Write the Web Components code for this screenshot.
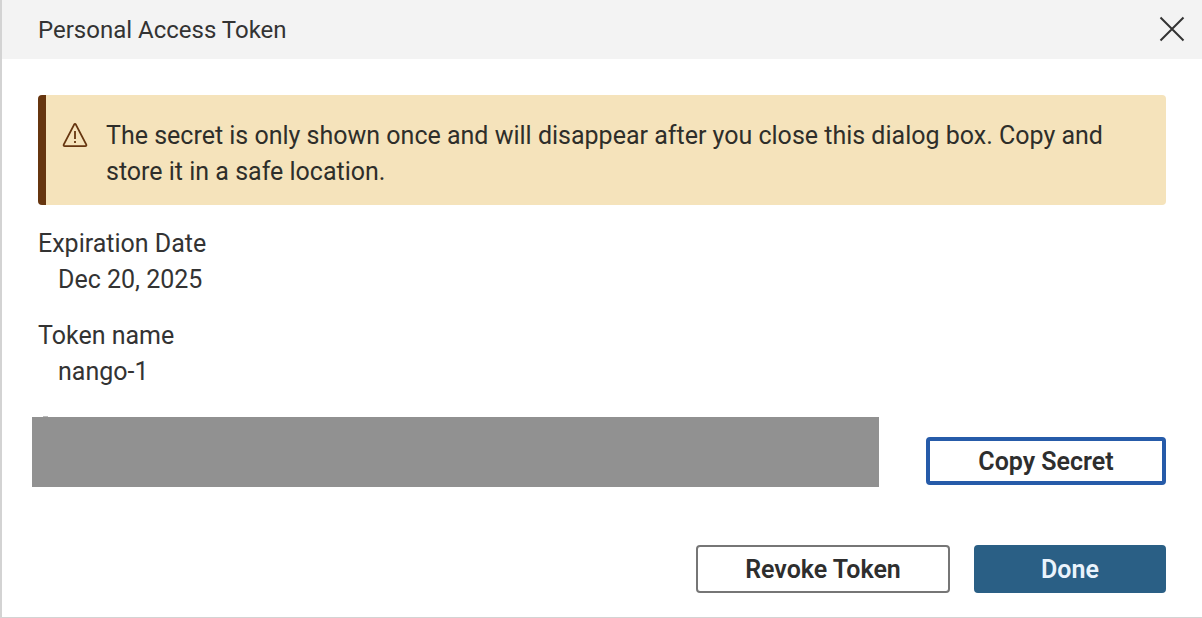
<!DOCTYPE html>
<html lang="en">
<head>
<meta charset="utf-8">
<meta name="viewport" content="width=device-width, initial-scale=1">
<title>Personal Access Token</title>
<style>
  body {
    margin: 0;
    background: #fff;
    color: #333;
    font: 400 25px/36px Roboto, "Liberation Sans", sans-serif;
  }
</style>
</head>
<body>
<token-dialog heading="Personal Access Token">
  <alert-banner>The secret is only shown once and will disappear after you close this dialog box. Copy and store it in a safe location.</alert-banner>
  <token-field label="Expiration Date">Dec 20, 2025</token-field>
  <token-field label="Token name">nango-1</token-field>
  <secret-row>
    <action-button variant="focused">Copy Secret</action-button>
  </secret-row>
  <action-button slot="actions" variant="outline">Revoke Token</action-button>
  <action-button slot="actions" variant="primary">Done</action-button>
</token-dialog>

<template id="token-dialog">
  <style>
    :host {
      display: flex;
      flex-direction: column;
      box-sizing: border-box;
      min-height: 100vh;
      border-left: 2px solid #d3d3d3;
      border-bottom: 1px solid #d3d3d3;
    }
    header {
      display: flex;
      align-items: center;
      justify-content: space-between;
      box-sizing: border-box;
      min-height: 59px;
      padding: 0 16px 0 36px;
      background: #f3f3f3;
    }
    h1 { margin: 0; font: inherit; font-size: 24px; }
    .close {
      display: flex;
      padding: 0 0 1px;
      border: 0;
      background: none;
      color: #333;
      cursor: pointer;
    }
    main {
      display: flex;
      flex-direction: column;
      gap: 20px;
      padding: 36px 36px 0;
    }
    footer {
      display: flex;
      justify-content: flex-end;
      gap: 24px;
      margin-top: auto;
      padding: 24px 36px;
    }
  </style>
  <header>
    <h1></h1>
    <button class="close" type="button" aria-label="Close">
      <svg width="28" height="28" viewBox="0 0 28 28" fill="none" stroke="currentColor" stroke-width="2" aria-hidden="true">
        <path d="M2.5 2.5 25.500 25.500M25.500 2.500 2.500 25.500"/>
      </svg>
    </button>
  </header>
  <main><slot></slot></main>
  <footer><slot name="actions"></slot></footer>
</template>

<template id="alert-banner">
  <style>
    :host {
      display: flex;
      gap: 18px;
      margin-bottom: 1px;
      padding: 23px 36px 15px 16px;
      border-left: 8px solid #66350f;
      border-radius: 4px;
      background: #f5e3bb;
      color: #2e2e2a;
    }
    svg { flex: none; margin-top: 4px; color: #66350f; }
    p { margin: 0; }
  </style>
  <svg width="26" height="26" viewBox="0 0 26 26" fill="none" stroke="currentColor" stroke-width="1.800" stroke-linejoin="round" role="img" aria-label="Warning">
    <path d="M12 2.800Q13 1.200 14 2.800L24.300 22.600Q24.700 24.200 23.200 24.200H2.800Q1.300 24.200 1.700 22.600Z"/>
    <path d="M13 9v8M13 19v2"/>
  </svg>
  <p><slot></slot></p>
</template>

<template id="token-field">
  <style>
    :host { display: block; }
    dl, dd { margin: 0; }
    dd { padding-left: 20px; }
  </style>
  <dl><dt></dt><dd><slot></slot></dd></dl>
</template>

<template id="secret-row">
  <style>
    :host {
      display: flex;
      align-items: flex-end;
      gap: 47px;
      margin: 7px 0 0 -6px;
    }
    .redacted {
      flex: 1;
      position: relative;
      height: 70px;
      margin-bottom: -2px;
      background: #919191;
    }
    .redacted::before {
      content: "";
      position: absolute;
      left: 11px;
      top: -1px;
      width: 5px;
      height: 1px;
      background: #bbb;
    }
  </style>
  <div class="redacted" role="img" aria-label="Secret hidden"></div>
  <slot></slot>
</template>

<template id="action-button">
  <style>
    :host { display: block; }
    button {
      box-sizing: border-box;
      min-width: 192px;
      height: 48px;
      padding: 2px 40px 0;
      border: 2px solid #767676;
      border-radius: 4px;
      background: #fff;
      color: #2e2e2e;
      font: inherit;
      font-weight: 600;
      white-space: nowrap;
      cursor: pointer;
    }
    :host([variant="outline"]) button { min-width: 254px; }
    :host([variant="focused"]) button { min-width: 240px; border: 4px solid #265ba9; }
    :host([variant="primary"]) button { border-color: #2a5f85; background: #2a5f85; color: #eaf3fc; }
  </style>
  <button type="button"><slot></slot></button>
</template>

<script>
  class TemplateElement extends HTMLElement {
    constructor() {
      super();
      const template = document.getElementById(this.localName);
      this.attachShadow({ mode: "open" }).append(template.content.cloneNode(true));
    }
  }
  customElements.define("token-dialog", class extends TemplateElement {
    connectedCallback() {
      this.shadowRoot.querySelector("h1").textContent = this.getAttribute("heading");
    }
  });
  customElements.define("token-field", class extends TemplateElement {
    connectedCallback() {
      this.shadowRoot.querySelector("dt").textContent = this.getAttribute("label");
    }
  });
  customElements.define("alert-banner", class extends TemplateElement {});
  customElements.define("secret-row", class extends TemplateElement {});
  customElements.define("action-button", class extends TemplateElement {});
</script>
</body>
</html>
